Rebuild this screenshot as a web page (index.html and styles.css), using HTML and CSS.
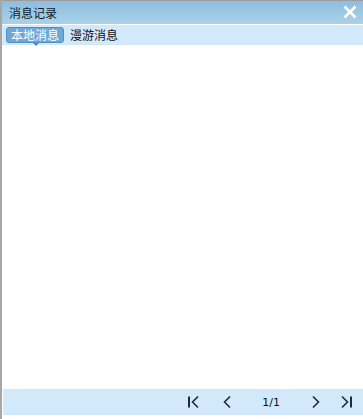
FILE: index.html
```html
<!DOCTYPE html>
<html>
<head>
<meta charset="utf-8">
<link rel="stylesheet" href="styles.css">
</head>
<body>
<div class="window">
  <div class="titlebar">
    <span class="title">消息记录</span>
    <svg class="close" width="14" height="14" viewBox="0 0 14 14"><path d="M1.5 1.5 L12.5 12.5 M12.5 1.5 L1.5 12.5" stroke="#fff" stroke-width="2.6" fill="none"/></svg>
  </div>
  <div class="tabbar">
    <span class="tab active">本地消息</span>
    <span class="tab">漫游消息</span>
  </div>
  <div class="content"></div>
  <div class="pager">
    <svg class="pbtn first" width="14" height="14" viewBox="0 0 14 14"><path d="M2 1.5 V12.5" stroke="#1c2b3f" stroke-width="2" fill="none"/><path d="M11 1.5 L5.5 7 L11 12.5" stroke="#1c2b3f" stroke-width="1.6" fill="none"/></svg>
    <svg class="pbtn prev" width="14" height="14" viewBox="0 0 14 14"><path d="M9 1.5 L3.5 7 L9 12.5" stroke="#1c2b3f" stroke-width="1.6" fill="none"/></svg>
    <span class="pageno">1/1</span>
    <svg class="pbtn next" width="14" height="14" viewBox="0 0 14 14"><path d="M5 1.5 L10.5 7 L5 12.5" stroke="#1c2b3f" stroke-width="1.6" fill="none"/></svg>
    <svg class="pbtn last" width="14" height="14" viewBox="0 0 14 14"><path d="M3 1.5 L8.5 7 L3 12.5" stroke="#1c2b3f" stroke-width="1.6" fill="none"/><path d="M12 1.5 V12.5" stroke="#1c2b3f" stroke-width="2" fill="none"/></svg>
  </div>
</div>
</body>
</html>
```

FILE: styles.css
```css
html, body {
  margin: 0;
  padding: 0;
  background: #fff;
}
.window {
  width: 363px;
  height: 419px;
  box-sizing: border-box;
  display: flex;
  flex-direction: column;
  border-left: 2px solid #a6a6a6;
  font-family: "Noto Sans CJK SC", "Noto Sans", sans-serif;
  font-size: 12px;
}
.titlebar {
  height: 25px;
  box-sizing: border-box;
  border-top: 1px solid #9d9d9d;
  background: linear-gradient(#8dbde0, #abd1e8);
  display: flex;
  align-items: center;
  justify-content: space-between;
  padding: 0 6px 0 7px;
  border-bottom: 1px solid #ffffff;
}
.title {
  color: #0c1a2a;
  line-height: 14px;
  margin-top: 1px;
}
.close {
  display: block;
  margin-top: -2px;
}
.tabbar {
  height: 20px;
  background: #d2e8fb;
  display: flex;
  align-items: center;
  padding-left: 4px;
  gap: 3px;
}
.tab {
  line-height: 14px;
  color: #111;
  padding: 1px 3px;
  position: relative;
}
.tab.active {
  background: #6ea9d6;
  color: #fff;
  border: 1px solid #4f8fc4;
  border-radius: 3px;
  padding: 0 4px;
}
.tab.active::after {
  content: "";
  position: absolute;
  left: 26px;
  bottom: -4px;
  border-left: 3px solid transparent;
  border-right: 3px solid transparent;
  border-top: 3px solid #4f8fc4;
}
.content {
  flex: 1;
  background: #fff;
}
.pager {
  height: 26px;
  margin-left: 1px;
  margin-bottom: 4px;
  background: #d2e8fb;
  display: flex;
  align-items: center;
  justify-content: flex-end;
  padding-right: 10px;
}
.pbtn {
  display: block;
}
.first { margin-right: 20px; }
.prev { margin-right: 27px; }
.pageno {
  font-family: "DejaVu Sans", sans-serif;
  font-size: 11px;
  color: #111;
  margin-right: 28px;
}
.next { margin-right: 17px; }
```
